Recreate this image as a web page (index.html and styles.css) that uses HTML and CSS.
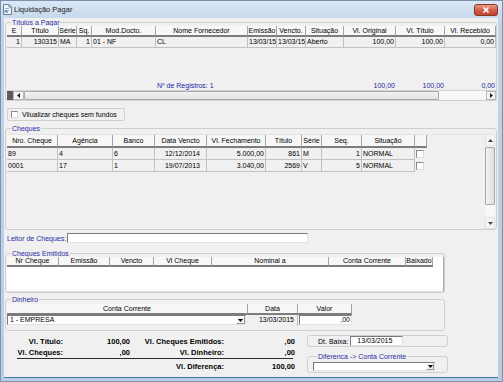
FILE: index.html
```html
<!DOCTYPE html>
<html lang="pt-BR">
<head>
    <meta charset="utf-8">
    <title>Liquidação Pagar</title>
    <link rel="stylesheet" href="styles.css">
</head>
<body>
<div class="window">
    <div class="titlebar">
        <svg class="app-icon" width="9" height="11" viewBox="0 0 9 11">
            <path d="M0.5 0.5h5.5l2.5 2.5v7.5h-8z" fill="#eef3f8" stroke="#6d7f95"/>
            <path d="M6 0.5v2.5h2.5" fill="none" stroke="#6d7f95"/>
            <path d="M2 4.5h4M2 6.5h4" stroke="#9fb0c4"/>
            <path d="M1 8.5l2-2v1.5h2" fill="none" stroke="#3f6fa8"/>
        </svg>
        <span class="title">Liquidação Pagar</span>
        <span class="close">
            <svg width="24" height="12" viewBox="0 0 24 12">
                <defs>
                    <linearGradient id="cg" x1="0" y1="0" x2="0" y2="1">
                        <stop offset="0" stop-color="#e9a393"/>
                        <stop offset="0.5" stop-color="#d2604a"/>
                        <stop offset="1" stop-color="#c2422c"/>
                    </linearGradient>
                </defs>
                <rect x="0.5" y="0.5" width="23" height="11" rx="2.5" fill="url(#cg)" stroke="#8c3526"/>
                <path d="M9.5 3.5l5 5M14.5 3.5l-5 5" stroke="#fff" stroke-width="1.7"/>
            </svg>
        </span>
    </div>

    <div class="client">
        <!-- Titulos a pagar -->
        <fieldset class="group titulos">
            <legend>Títulos a Pagar</legend>
            <div class="grid grid-tit">
                <div class="row head cols-tit">
                    <span>E</span><span>Título</span><span>Série</span><span>Sq.</span><span>Mod.Docto.</span>
                    <span>Nome Fornecedor</span><span>Emissão</span><span>Vencto.</span><span>Situação</span>
                    <span>Vl. Original</span><span>Vl. Título</span><span>Vl. Recebido</span>
                </div>
                <div class="row data cols-tit">
                    <span class="r">1</span><span class="r">130315</span><span>MA</span><span class="r">1</span><span>01 - NF</span>
                    <span>CL</span><span>13/03/15</span><span>13/03/15</span><span>Aberto</span>
                    <span class="r">100,00</span><span class="r">100,00</span><span class="r">0,00</span>
                </div>
                <div class="grid-space"></div>
                <div class="row foot cols-tit">
                    <span class="at-6">Nº de Registros: 1</span>
                    <span class="at-10 r">100,00</span><span class="r">100,00</span><span class="r">0,00</span>
                </div>
                <div class="hscroll">
                    <span class="hs-dark"></span>
                    <span class="sb-btn hs-btn"><svg width="3" height="5" viewBox="0 0 3 5"><path d="M3 0v5L0 2.5z"/></svg></span>
                    <span class="hs-thumb"></span>
                    <span class="hs-track"></span>
                    <span class="sb-btn hs-btn"><svg width="3" height="5" viewBox="0 0 3 5"><path d="M0 0v5L3 2.5z"/></svg></span>
                </div>
            </div>
        </fieldset>

        <label class="check-panel">
            <span class="checkbox"></span>
            <span>Vilualizar cheques sem fundos</span>
        </label>

        <!-- Cheques -->
        <fieldset class="group cheques">
            <legend>Cheques</legend>
            <div class="grid grid-chq">
                <div class="chq-cols">
                    <div class="row head cols-chq">
                        <span>Nro. Cheque</span><span>Agência</span><span>Banco</span><span>Data Vencto</span>
                        <span>Vl. Fechamento</span><span>Título</span><span>Série</span><span>Seq.</span>
                        <span>Situação</span><span></span>
                    </div>
                    <div class="row data cols-chq">
                        <span>89</span><span>4</span><span>6</span><span class="r pr">12/12/2014</span>
                        <span class="r">5.000,00</span><span class="r">861</span><span>M</span><span class="r">1</span>
                        <span>NORMAL</span><span class="cb-cell"><i class="checkbox"></i></span>
                    </div>
                    <div class="row data cols-chq">
                        <span>0001</span><span>17</span><span>1</span><span class="r pr">19/07/2013</span>
                        <span class="r">3.040,00</span><span class="r">2569</span><span>V</span><span class="r">5</span>
                        <span>NORMAL</span><span class="cb-cell"><i class="checkbox"></i></span>
                    </div>
                </div>
                <div class="vscroll">
                    <span class="sb-btn vs-btn"><svg width="5" height="3" viewBox="0 0 5 3"><path d="M0 3h5L2.5 0z"/></svg></span>
                    <span class="vs-track"><span class="vs-thumb"></span></span>
                    <span class="sb-btn vs-btn"><svg width="5" height="3" viewBox="0 0 5 3"><path d="M0 0h5L2.5 3z"/></svg></span>
                </div>
            </div>
        </fieldset>

        <div class="leitor">
            <span class="leitor-label">Leitor de Cheques:</span>
            <span class="edit leitor-edit"></span>
        </div>

        <!-- Cheques emitidos -->
        <fieldset class="group narrow emitidos">
            <legend>Cheques Emitidos</legend>
            <div class="grid grid-emi">
                <div class="row head cols-emi">
                    <span>Nr Cheque</span><span>Emissão</span><span>Vencto</span><span>Vl Cheque</span>
                    <span>Nominal a</span><span>Conta Corrente</span><span>Baixado</span>
                </div>
            </div>
        </fieldset>

        <!-- Dinheiro -->
        <fieldset class="group narrow dinheiro">
            <legend>Dinheiro</legend>
            <div class="row head cols-din">
                <span>Conta Corrente</span><span>Data</span><span>Valor</span>
            </div>
            <div class="row din-row cols-din">
                <span class="combo din-combo">
                    <span class="combo-text">1 - EMPRESA</span>
                    <span class="drop"><svg width="5" height="3" viewBox="0 0 5 3"><path d="M0 0h5L2.5 3z"/></svg></span>
                </span>
                <span class="din-date">13/03/2015</span>
                <span class="edit din-valor">,00</span>
            </div>
        </fieldset>

        <div class="bottom">
            <div class="totals">
                <span class="lbl">Vl. Título:</span><span class="val">100,00</span>
                <span class="lbl">Vl. Cheques Emitidos:</span><span class="val">,00</span>
                <span class="lbl">Vl. Cheques:</span><span class="val">,00</span>
                <span class="lbl">Vl. Dinheiro:</span><span class="val">,00</span>
                <span class="rule"></span>
                <span class="lbl l3">Vl. Diferença:</span><span class="val">100,00</span>
            </div>
            <div class="side">
                <div class="baixa">
                    <span>Dt. Baixa:</span>
                    <span class="edit baixa-edit">13/03/2015</span>
                </div>
                <fieldset class="group diferenca">
                    <legend>Diferenca -&gt; Conta Corrente</legend>
                    <span class="combo dif-combo">
                        <span class="combo-text"></span>
                        <span class="drop"><svg width="5" height="3" viewBox="0 0 5 3"><path d="M0 0h5L2.5 3z"/></svg></span>
                    </span>
                </fieldset>
            </div>
        </div>
    </div>
</div>
</body>
</html>
```

FILE: styles.css
```css
* {
    box-sizing: border-box;
    margin: 0;
    padding: 0;
}

body {
    font-family: "Liberation Sans", Arial, sans-serif;
    font-size: 7px;
    color: #000;
    background: #fff;
}

.window {
    width: 503px;
    height: 382px;
    display: flex;
    flex-direction: column;
    background: linear-gradient(to bottom, #dbe7f4, #bfd3ea 6%, #b9cde4);
    border: 1px solid #7d93ad;
    padding: 0 4px 4px 3px;
}

/* title bar */
.titlebar {
    height: 17px;
    flex-shrink: 0;
    display: flex;
    align-items: center;
}

.app-icon {
    margin-left: -1px;
    margin-right: 2px;
}

.title {
    font-size: 7.5px;
    color: #1b1b1b;
}

.close {
    margin-left: auto;
    display: flex;
}

.client {
    flex: 1;
    display: flex;
    flex-direction: column;
    background: #f0f0f0;
    box-shadow: 0 1px 0 #3d7aa6;
}

/* group boxes */
.group {
    border: 1px solid #cfcfcf;
    border-radius: 3px;
    margin: 0 1px;
    padding: 0 0 0 1px;
    min-width: 0;
}

.group legend {
    color: #2b2ba3;
    line-height: 7px;
    margin-left: 4px;
    padding: 0 1px;
}

.narrow {
    width: 440px;
}

/* grid rows */
.row {
    display: grid;
}

.row > span {
    white-space: nowrap;
    overflow: hidden;
}

.head > span {
    background: #f7f7f7;
    border-right: 1px solid #a4a4a4;
    border-bottom: 2px solid #7c7c7c;
    text-align: center;
    height: 11px;
    line-height: 9px;
}

.data > span {
    background: #f0f0f0;
    border-right: 1px solid #c2c2c2;
    border-bottom: 1px solid #c2c2c2;
    height: 11px;
    line-height: 10px;
    padding: 0 1px;
}

.r {
    text-align: right;
}

.data > .pr {
    padding-right: 6px;
}

.cols-tit {
    grid-template-columns: 15px 37px 18px 15px 64px 92px 29px 29px 38px 52px 49px 1fr;
}

.cols-chq {
    grid-template-columns: 51px 55px 42px 52px 59px 36px 20px 40px 53px 12px;
}

.cols-emi {
    grid-template-columns: 52px 51px 44px 58px 117px 77px 27px;
}

.cols-din {
    grid-template-columns: 241px 50px 54px;
}

/* titulos */
.titulos {
    margin-top: 1px;
}

.grid-tit {
    height: 74px;
    display: flex;
    flex-direction: column;
    background: #f0f0f0;
}

.grid-space {
    flex: 1;
}

.foot > span {
    color: #2424a8;
    line-height: 8px;
    height: 8px;
    padding: 0 1px;
}

.foot > .at-6 {
    grid-column: 6 / 9;
}

.foot > .at-10 {
    grid-column: 10;
}

.hscroll {
    height: 10px;
    display: flex;
    border-top: 1px solid #d4d4d4;
}

.hs-dark {
    width: 6px;
    background: #5c5c5c;
}

.sb-btn {
    display: flex;
    align-items: center;
    justify-content: center;
    background: #f5f5f5;
    border: 1px solid #b8b8b8;
    fill: #222;
}

.hs-btn {
    width: 11px;
}

.hs-btn:last-child {
    width: 10px;
}

.hs-thumb {
    width: 415px;
    background: linear-gradient(#f2f2f2, #e2e2e2);
    border: 1px solid #a9a9a9;
    border-radius: 1px;
}

.hs-track {
    flex: 1;
    background: #f7f7f7;
}

/* check panel */
.check-panel {
    width: 118px;
    height: 13px;
    margin: 7px 0 0 3px;
    border: 1px solid #cfcfcf;
    border-radius: 2px;
    display: flex;
    align-items: center;
    gap: 4px;
    padding-left: 3px;
}

.checkbox {
    width: 7px;
    height: 7px;
    background: #fff;
    border: 1px solid #8a8a8a;
    border-right-color: #dcdcdc;
    border-bottom-color: #dcdcdc;
    display: block;
}

/* cheques */
.cheques {
    margin-top: 4px;
    padding-top: 2px;
}

.grid-chq {
    height: 95px;
    display: flex;
}

.chq-cols {
    flex: 1;
    background: #f0f0f0;
    border-top: 1px solid #e4e4e4;
}

.cheques .head > span {
    height: 13px;
    line-height: 11px;
}

.cheques .data > span {
    height: 12px;
    line-height: 11px;
}

.cheques .data > .cb-cell {
    background: #f0f0f0;
    border: none;
    padding: 2px 0 0 1px;
}

.cb-cell .checkbox {
    width: 8px;
    height: 8px;
}

.vscroll {
    width: 10px;
    display: flex;
    flex-direction: column;
    margin-right: 1px;
}

.vs-btn {
    height: 12px;
    border-color: #e2e2e2;
    fill: #444;
}

.vs-track {
    flex: 1;
    background: #f7f7f7;
    padding-top: 1px;
}

.vs-thumb {
    display: block;
    height: 58px;
    background: linear-gradient(to right, #f2f2f2, #e0e0e0);
    border: 1px solid #a9a9a9;
    border-radius: 1px;
}

/* edits and combos */
.edit {
    background: #fff;
    border: 1px solid #e3e3e3;
    border-top-color: #7a7a7a;
    border-left-color: #7a7a7a;
    display: block;
    height: 10px;
    line-height: 8px;
}

.leitor {
    height: 10px;
    margin-top: 3px;
    padding-left: 3px;
    display: flex;
    align-items: center;
    color: #2b2ba3;
}

.leitor-label {
    flex-shrink: 0;
    white-space: nowrap;
}

.leitor-edit {
    width: 241px;
    flex-shrink: 0;
    margin-left: 1px;
}

.combo {
    display: flex;
    background: #fff;
    border: 1px solid #e3e3e3;
    border-top-color: #7a7a7a;
    border-left-color: #7a7a7a;
}

.combo-text {
    flex: 1;
    padding-left: 2px;
    line-height: 8px;
}

.drop {
    width: 9px;
    display: flex;
    align-items: center;
    justify-content: center;
    background: #f2f2f2;
    border: 1px solid #9a9a9a;
    border-top-color: #fff;
    border-left-color: #fff;
    fill: #000;
}

/* cheques emitidos */
.emitidos {
    margin-top: 7px;
}

.grid-emi {
    height: 35px;
    background: #fff;
    border-right: 1px solid #a8a8a8;
    border-bottom: 1px solid #e0e0e0;
}

.emitidos .head > span {
    height: 10px;
    line-height: 8px;
}

/* dinheiro */
.dinheiro {
    margin-top: 3px;
    padding-top: 1px;
    padding-bottom: 4px;
}

.din-row {
    height: 11px;
}

.din-row > span {
    height: 11px;
}

.din-row > .din-combo {
    width: 239px;
    height: 10px;
}

.din-date {
    text-align: right;
    padding-right: 3px;
    line-height: 10px;
    border-right: 1px solid #c2c2c2;
}

.din-row > .din-valor {
    text-align: right;
    padding-right: 1px;
    margin-left: 1px;
    height: 10px;
}

/* bottom area */
.bottom {
    flex: 1;
    display: flex;
}

.totals {
    margin-left: 13px;
    padding-top: 5px;
    display: grid;
    grid-template-columns: 47px 66px 95px 70px;
    grid-template-rows: 12px 10px 1px 14px;
    font-size: 7.5px;
    font-weight: bold;
    align-self: flex-start;
}

.lbl {
    text-align: right;
    padding-right: 1px;
}

.val {
    text-align: right;
}

.totals span {
    line-height: 12px;
}

.totals .rule {
    grid-column: 1 / -1;
    background: #2a2a2a;
    margin-right: 2px;
    line-height: 1px;
}

.totals .lbl:nth-child(5),
.totals .val:nth-child(6),
.totals .lbl:nth-child(7),
.totals .val:nth-child(8) {
    line-height: 9px;
}

.totals .l3 {
    grid-column: 3;
}

.totals .l3,
.totals .l3 + .val {
    align-self: end;
}

.side {
    margin-left: 12px;
    width: 141px;
    padding-top: 4px;
}

.baixa {
    height: 12px;
    border: 1px solid #cfcfcf;
    border-radius: 3px;
    display: flex;
    align-items: center;
    padding-left: 10px;
}

.baixa-edit {
    width: 53px;
    margin-left: 2px;
    padding-left: 6px;
}

.diferenca {
    margin: 6px 0 0;
    padding: 2px 0 1px 5px;
}

.dif-combo {
    width: 122px;
    height: 9px;
}

.dif-combo .drop {
    width: 8px;
}
```
